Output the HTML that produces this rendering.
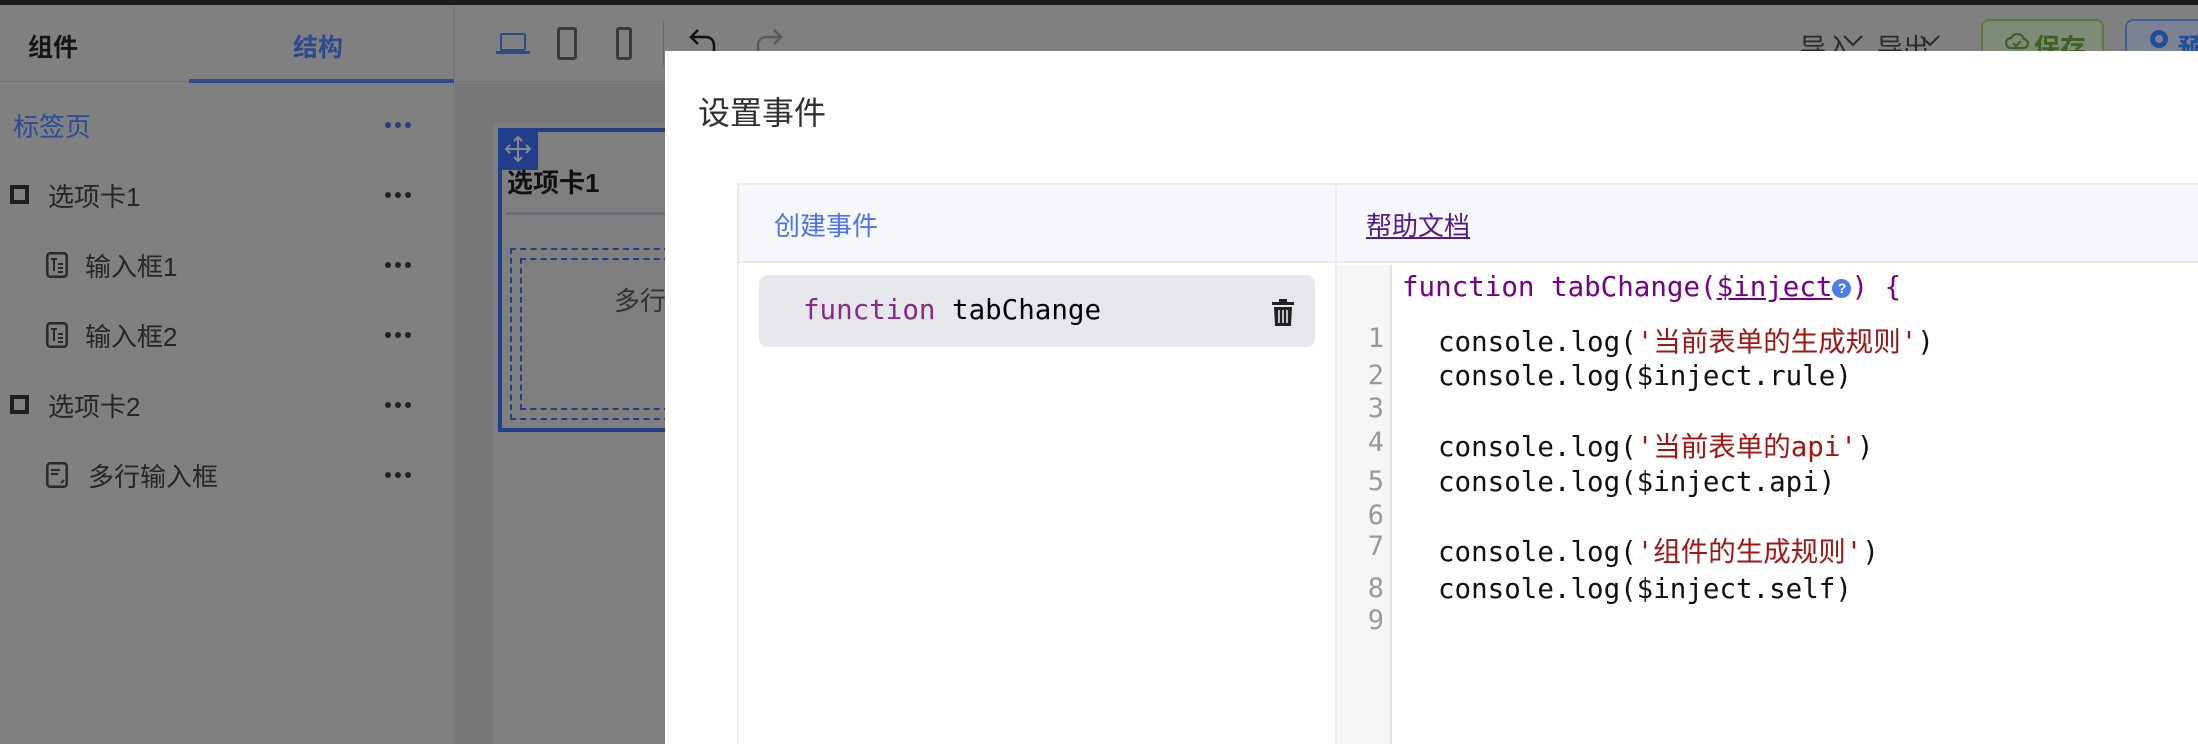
<!DOCTYPE html>
<html><head><meta charset="utf-8"><style>
*{margin:0;padding:0;box-sizing:border-box}
body{width:2198px;height:744px;overflow:hidden;position:relative;background:#7d7d7d;font-family:"Liberation Sans","Noto Sans CJK SC",sans-serif}
.a{position:absolute;white-space:nowrap}
.mono{font-family:"DejaVu Sans Mono","Liberation Mono","Noto Sans CJK SC",monospace}
.dots{position:absolute;left:385px;width:26px;height:6px}
.dots i{position:absolute;top:0;width:6px;height:6px;border-radius:50%;background:#2a3f78}
.sq{position:absolute;width:19px;height:19px;border:4px solid #1f1f1f}
.it{position:absolute;font-size:26px;color:#262626}
.ln{position:absolute;left:1340px;width:44px;text-align:right;color:#999;font-size:27px;line-height:34px}
.cl{position:absolute;left:1438px;font-size:27.5px;line-height:34px;color:#111;white-space:nowrap}
.s{color:#a31515}
</style></head><body>
<div class="a" style="left:0;top:0;width:2198px;height:5px;background:#1c1c1c"></div>
<!-- sidebar -->
<div class="a" style="left:0;top:5px;width:454px;height:739px;background:#808080;border-right:1px solid #747474"></div>
<div class="a" style="left:0;top:81px;width:454px;height:1px;background:#747474"></div>
<div class="a" style="left:28px;top:28px;font-size:25px;font-weight:bold;color:#151515">组件</div>
<div class="a" style="left:293px;top:28px;font-size:25px;font-weight:bold;color:#2b4b8e">结构</div>
<div class="a" style="left:189px;top:79px;width:265px;height:4px;background:#2c4c8f"></div>

<div class="it" style="left:13px;top:107px;color:#2a4d99">标签页</div>
<div class="dots" style="top:122px"><i style="left:0"></i><i style="left:10px"></i><i style="left:20px"></i></div>

<div class="sq" style="left:10px;top:185px"></div>
<div class="it" style="left:48px;top:177px">选项卡1</div>
<div class="dots" style="top:192px"><i style="left:0;background:#222"></i><i style="left:10px;background:#222"></i><i style="left:20px;background:#222"></i></div>

<svg class="a" style="left:46px;top:252px" width="22" height="26" viewBox="0 0 22 26"><rect x="1.3" y="1.3" width="19.4" height="23.4" rx="3" fill="none" stroke="#2a2a2a" stroke-width="2.5"/><path d="M5 7H11M8 7V19M12 12H17M12 16H17M12 20H17" stroke="#2a2a2a" stroke-width="2"/></svg>
<div class="it" style="left:85px;top:247px">输入框1</div>
<div class="dots" style="top:262px"><i style="left:0;background:#222"></i><i style="left:10px;background:#222"></i><i style="left:20px;background:#222"></i></div>

<svg class="a" style="left:46px;top:322px" width="22" height="26" viewBox="0 0 22 26"><rect x="1.3" y="1.3" width="19.4" height="23.4" rx="3" fill="none" stroke="#2a2a2a" stroke-width="2.5"/><path d="M5 7H11M8 7V19M12 12H17M12 16H17M12 20H17" stroke="#2a2a2a" stroke-width="2"/></svg>
<div class="it" style="left:85px;top:317px">输入框2</div>
<div class="dots" style="top:332px"><i style="left:0;background:#222"></i><i style="left:10px;background:#222"></i><i style="left:20px;background:#222"></i></div>

<div class="sq" style="left:10px;top:395px"></div>
<div class="it" style="left:48px;top:387px">选项卡2</div>
<div class="dots" style="top:402px"><i style="left:0;background:#222"></i><i style="left:10px;background:#222"></i><i style="left:20px;background:#222"></i></div>

<svg class="a" style="left:46px;top:462px" width="22" height="26" viewBox="0 0 22 26"><rect x="1.3" y="1.3" width="19.4" height="23.4" rx="3" fill="none" stroke="#2a2a2a" stroke-width="2.5"/><path d="M5 8H14M5 12H12M15 21L18 18" stroke="#2a2a2a" stroke-width="2"/></svg>
<div class="it" style="left:88px;top:457px">多行输入框</div>
<div class="dots" style="top:472px"><i style="left:0;background:#222"></i><i style="left:10px;background:#222"></i><i style="left:20px;background:#222"></i></div>

<!-- toolbar -->
<div class="a" style="left:455px;top:5px;width:1743px;height:77px;background:#808080;border-bottom:1px solid #747474"></div>
<div class="a" style="left:500px;top:33px;width:26px;height:18px;border:2.5px solid #2b4b8e;border-radius:2px"></div>
<div class="a" style="left:496px;top:51px;width:34px;height:3px;background:#2b4b8e"></div>
<div class="a" style="left:557px;top:27px;width:20px;height:33px;border:3px solid #3a3a3a;border-radius:3px"></div>
<div class="a" style="left:616px;top:27px;width:16px;height:33px;border:3px solid #3a3a3a;border-radius:3px"></div>
<div class="a" style="left:663px;top:20px;width:1px;height:46px;background:#6a6a6a"></div>
<svg class="a" style="left:688px;top:26px" width="100" height="30" viewBox="0 0 100 30"><path d="M10 4 L3 11 L10 18 M3 11 H18 A8 8 0 0 1 26 19 V28" fill="none" stroke="#111" stroke-width="2.5"/><path d="M86 4 L93 11 L86 18 M93 11 H78 A8 8 0 0 0 70 19 V28" fill="none" stroke="#5a5a5a" stroke-width="2.5"/></svg>
<div class="a" style="left:1800px;top:28px;font-size:26px;color:#2a2a2a">导入</div>
<svg class="a" style="left:1842px;top:34px" width="22" height="14"><path d="M2 2L11 11L20 2" fill="none" stroke="#2a2a2a" stroke-width="2"/></svg>
<div class="a" style="left:1877px;top:28px;font-size:26px;color:#2a2a2a">导出</div>
<svg class="a" style="left:1919px;top:34px" width="22" height="14"><path d="M2 2L11 11L20 2" fill="none" stroke="#2a2a2a" stroke-width="2"/></svg>
<div class="a" style="left:1981px;top:19px;width:123px;height:50px;border:2px solid #5d7a3e;border-radius:8px;background:#7f8a78"></div>
<svg class="a" style="left:2005px;top:30px" width="24" height="22" viewBox="0 0 24 22"><path d="M6 18A5 5 0 0 1 6 8A7 7 0 0 1 19 9A4.5 4.5 0 0 1 18 18Z" fill="none" stroke="#3e6020" stroke-width="2.2"/><path d="M8 13L11 16L16 11" fill="none" stroke="#3e6020" stroke-width="2"/></svg>
<div class="a" style="left:2034px;top:28px;font-size:26px;font-weight:bold;color:#3e6020">保存</div>
<div class="a" style="left:2125px;top:19px;width:90px;height:50px;border:2px solid #3d5e99;border-radius:8px;background:#7c8292"></div>
<div class="a" style="left:2150px;top:30px;width:18px;height:18px;border-radius:50%;border:5px solid #1f4f9c"></div>
<div class="a" style="left:2178px;top:28px;font-size:26px;font-weight:bold;color:#1f4f9c">预</div>

<!-- canvas -->
<div class="a" style="left:455px;top:83px;width:210px;height:661px;background:#787878"></div>
<div class="a" style="left:493px;top:123px;width:172px;height:621px;background:#7f7f7f"></div>
<div class="a" style="left:498px;top:128px;width:200px;height:304px;border:4px solid #213e8c"></div>
<div class="a" style="left:498px;top:128px;width:40px;height:42px;background:#213e8c"></div>
<svg class="a" style="left:503px;top:134px" width="30" height="30" viewBox="0 0 30 30"><path d="M15 3V27M3 15H27M11 7L15 3L19 7M11 23L15 27L19 23M7 11L3 15L7 19M23 11L27 15L23 19" fill="none" stroke="#8a8a8a" stroke-width="2"/></svg>
<div class="a" style="left:507px;top:163px;font-size:26px;font-weight:bold;color:#111">选项卡1</div>
<div class="a" style="left:506px;top:212px;width:160px;height:3px;background:#6c6c74"></div>
<div class="a" style="left:510px;top:248px;width:160px;height:172px;border:2px dashed #213e8c"></div>
<div class="a" style="left:520px;top:258px;width:150px;height:152px;border:2px dashed #213e8c"></div>
<div class="a" style="left:614px;top:281px;font-size:26px;color:#333">多行</div>

<!-- modal -->
<div class="a" style="left:665px;top:51px;width:1533px;height:693px;background:#fff"></div>
<div class="a" style="left:698px;top:88px;font-size:32px;color:#303030">设置事件</div>
<div class="a" style="left:737px;top:183px;width:1461px;height:561px;border-left:2px solid #ebebef;border-top:2px solid #ebebef"></div>
<div class="a" style="left:739px;top:185px;width:1459px;height:78px;background:#f7f8fd;border-bottom:2px solid #ebebef"></div>
<div class="a" style="left:1335px;top:185px;width:2px;height:559px;background:#ebebef"></div>
<div class="a" style="left:774px;top:206px;font-size:26px;color:#4a72f5">创建事件</div>
<div class="a" style="left:1366px;top:206px;font-size:26px;color:#551a8b;text-decoration:underline">帮助文档</div>

<div class="a" style="left:759px;top:275px;width:556px;height:72px;background:#e6e7ec;border-radius:9px"></div>
<div class="a mono" style="left:803px;top:293px;font-size:27.5px;line-height:34px"><span style="color:#8a2a88">function</span> <span style="color:#000">tabChange</span></div>
<svg class="a" style="left:1270px;top:297px" width="26" height="30" viewBox="0 0 26 30"><path d="M9 2H17V5H24V8H2V5H9Z" fill="#222"/><path d="M4 10H22L21 29H5Z" fill="#222"/><path d="M9 13V26M13 13V26M17 13V26" stroke="#e6e7ec" stroke-width="1.6"/></svg>

<!-- code -->
<div class="a" style="left:1337px;top:265px;width:55px;height:479px;background:#f6f6f6;border-right:2px solid #e2e2e2"></div>
<div class="cl mono" style="left:1402px;top:270px;color:#770088">function tabChange(<span style="text-decoration:underline">$inject<span style="display:inline-block;width:19px;height:19px;border-radius:50%;background:#4a7cf0;color:#fff;font-size:14px;line-height:19px;text-align:center;vertical-align:middle;font-family:'Liberation Sans',sans-serif;font-weight:bold">?</span></span>) {</div>
<div class="ln mono" style="top:322px">1</div><div class="cl mono" style="top:325px">console.log(<span class="s">'当前表单的生成规则'</span>)</div>
<div class="ln mono" style="top:359px">2</div><div class="cl mono" style="top:359px">console.log($inject.rule)</div>
<div class="ln mono" style="top:392px">3</div>
<div class="ln mono" style="top:426px">4</div><div class="cl mono" style="top:430px">console.log(<span class="s">'当前表单的api'</span>)</div>
<div class="ln mono" style="top:465px">5</div><div class="cl mono" style="top:465px">console.log($inject.api)</div>
<div class="ln mono" style="top:499px">6</div>
<div class="ln mono" style="top:530px">7</div><div class="cl mono" style="top:535px">console.log(<span class="s">'组件的生成规则'</span>)</div>
<div class="ln mono" style="top:572px">8</div><div class="cl mono" style="top:572px">console.log($inject.self)</div>
<div class="ln mono" style="top:604px">9</div>
</body></html>
